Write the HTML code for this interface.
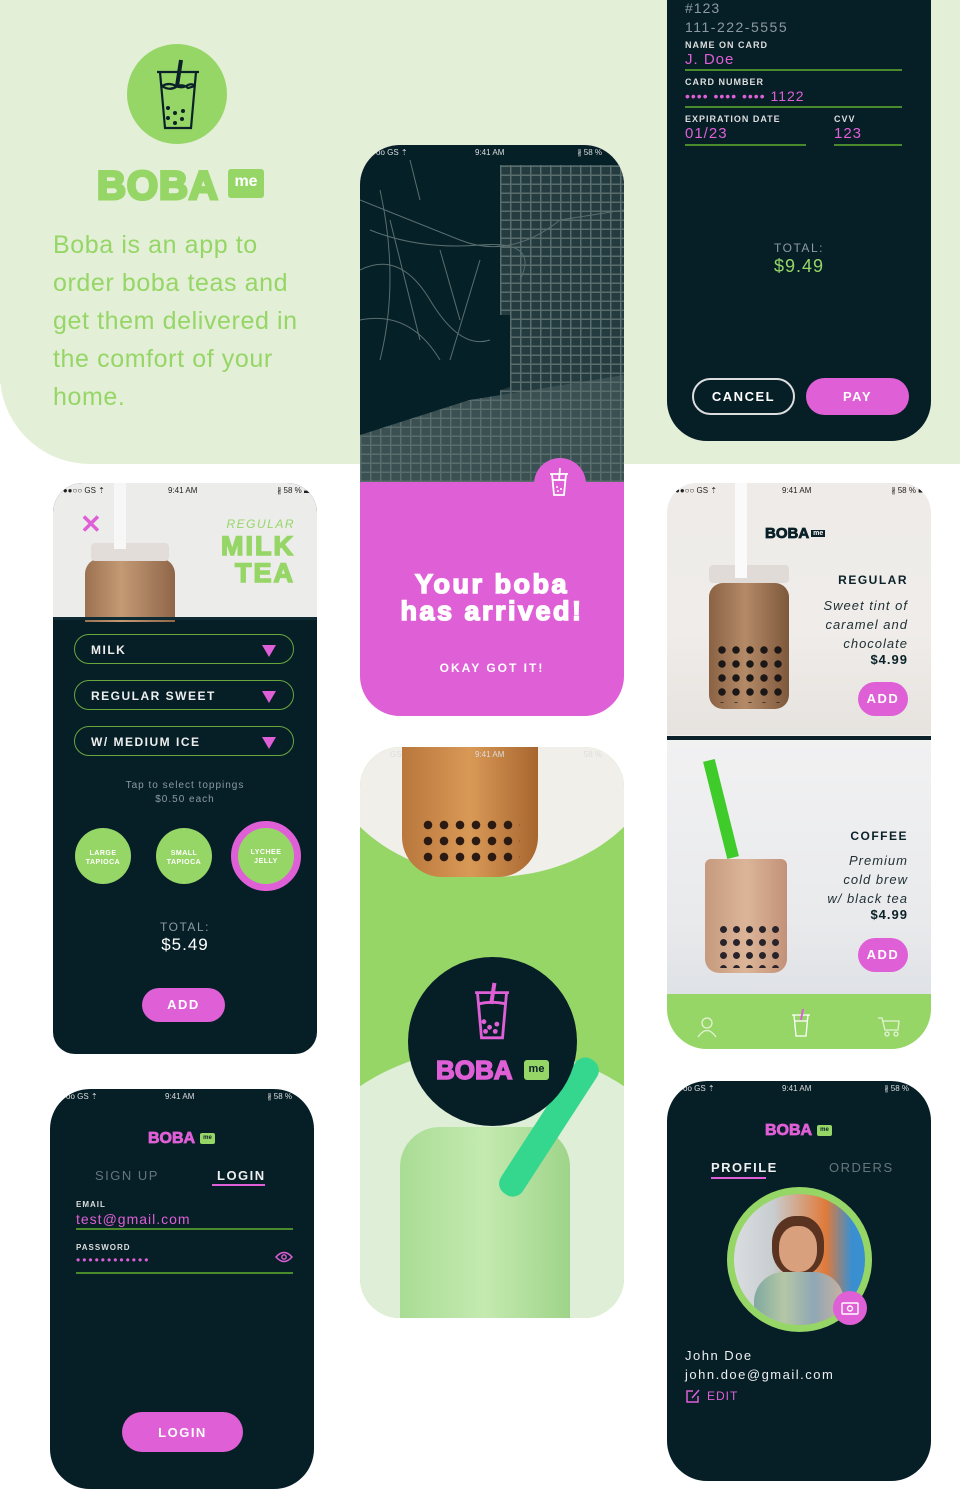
<!DOCTYPE html>
<html><head><meta charset="utf-8"><style>
*{margin:0;padding:0;box-sizing:border-box}
body{width:960px;height:1440px;position:relative;overflow:hidden;background:#fff;font-family:"Liberation Sans",sans-serif}
.a{position:absolute}
.dark{background:#061f27}
.card{position:absolute;overflow:hidden;border-radius:40px}
.sb{position:absolute;left:0;right:0;top:3px;height:12px;font-size:8px;color:#222}
.sb span{position:absolute}
.g{color:#96d667}.p{color:#df5fd6}
.lbl{font-size:9px;letter-spacing:1px;color:#ddd;font-weight:bold}
.dd{position:absolute;left:21px;width:220px;height:30px;border:1.5px solid #6aa63e;border-radius:15px;color:#eee;font-weight:bold;font-size:12px;letter-spacing:1.5px;padding:8px 0 0 16px}
.dd i{position:absolute;right:17px;top:10px;width:0;height:0;border-left:7px solid transparent;border-right:7px solid transparent;border-top:12px solid #df5fd6}
.top{position:absolute;width:56px;height:56px;border-radius:50%;background:#96d667;color:#fff;font-size:7px;font-weight:bold;text-align:center;letter-spacing:.5px;padding-top:21px;line-height:9px}
.btn{position:absolute;border-radius:20px;background:#df5fd6;color:#fff;font-weight:bold;text-align:center;letter-spacing:1.5px}
.line{position:absolute;height:1.5px;background:#4b8a2c}
.map{background-color:#062028}
.heavy{-webkit-text-stroke:1.5px currentColor}
</style></head><body>
<div class="a" style="left:0;top:0;width:960px;height:464px;background:#e3efd6"></div>
<div class="a" style="left:0;top:384px;width:90px;height:80px;background:#fff"></div>
<div class="a" style="left:0;top:300px;width:180px;height:164px;background:#e3efd6;border-bottom-left-radius:90px"></div>

<div class="a" style="left:127px;top:44px;width:100px;height:100px;border-radius:50%;background:#96d667"></div>
<svg class="a" style="left:152px;top:58px" width="52" height="76" viewBox="0 0 52 76"><g fill="none" stroke="#0b2129" stroke-width="2.2"><line x1="5" y1="14" x2="47" y2="14"/><path d="M8 14 L13 70 L39 70 L44 14"/><path d="M10 28 Q17 24 24 28 Q30 31 36 27 Q40 25 43 28"/><path d="M10 28 Q17 33 24 29 Q30 25 36 30 L43 28"/></g><line x1="29" y1="2" x2="25" y2="28" stroke="#0b2129" stroke-width="4"/><g fill="#0b2129"><circle cx="16" cy="50" r="2"/><circle cx="23" cy="55" r="2"/><circle cx="31" cy="53" r="2"/><circle cx="16" cy="60" r="2"/><circle cx="30" cy="61" r="2"/><circle cx="23" cy="65" r="2"/></g></svg>
<div class="a g" style="left:97px;top:164px;font-size:40px;font-weight:900;letter-spacing:1px;-webkit-text-stroke:3px #96d667">BOBA</div>
<div class="a" style="left:228px;top:169px;width:36px;height:29px;background:#96d667;border-radius:3px;color:#fff;font-weight:bold;font-size:16px;text-align:center;line-height:26px">me</div>
<div class="a g" style="left:53px;top:226px;font-size:25px;line-height:38px;white-space:nowrap;letter-spacing:.6px">Boba is an app to<br>order boba teas and<br>get them delivered in<br>the comfort of your<br>home.</div>

<div class="a dark" style="left:667px;top:0;width:264px;height:441px;border-radius:0 0 40px 40px"></div>
<div class="a" style="left:685px;top:0;color:#8d9aa0;font-size:14px;letter-spacing:1px">#123</div>
<div class="a" style="left:685px;top:19px;color:#8d9aa0;font-size:14px;letter-spacing:1.5px">111-222-5555</div>
<div class="a lbl" style="left:685px;top:40px">NAME ON CARD</div>
<div class="a p" style="left:685px;top:51px;font-size:15px;letter-spacing:1px">J. Doe</div>
<div class="line" style="left:685px;top:69px;width:217px"></div>
<div class="a lbl" style="left:685px;top:77px">CARD NUMBER</div>
<div class="a p" style="left:685px;top:88px;font-size:14px;letter-spacing:1px">•••• •••• •••• 1122</div>
<div class="line" style="left:685px;top:106px;width:217px"></div>
<div class="a lbl" style="left:685px;top:114px">EXPIRATION DATE</div>
<div class="a p" style="left:685px;top:125px;font-size:15px;letter-spacing:1px">01/23</div>
<div class="line" style="left:685px;top:144px;width:121px"></div>
<div class="a lbl" style="left:834px;top:114px">CVV</div>
<div class="a p" style="left:834px;top:125px;font-size:15px;letter-spacing:1px">123</div>
<div class="line" style="left:834px;top:144px;width:68px"></div>
<div class="a" style="left:667px;top:241px;width:264px;text-align:center;color:#8d9aa0;font-size:12px;letter-spacing:1.5px">TOTAL:</div>
<div class="a g" style="left:667px;top:256px;width:264px;text-align:center;font-size:18px;letter-spacing:1px">$9.49</div>
<div class="a" style="left:692px;top:378px;width:103px;height:37px;border:2px solid #ddd;border-radius:19px;color:#fff;font-weight:bold;font-size:13px;letter-spacing:1.5px;text-align:center;line-height:33px">CANCEL</div>
<div class="btn" style="left:806px;top:378px;width:103px;height:37px;font-size:13px;line-height:37px;border-radius:19px">PAY</div>

<div class="card" style="left:360px;top:145px;width:264px;height:571px;background:#df5fd6">
 <div class="a map" style="left:0;top:0;width:264px;height:337px"></div>
 <div class="a" style="left:140px;top:20px;width:124px;height:317px;background:repeating-linear-gradient(0deg,#5a6d6d 0 1.5px,transparent 1.5px 9px),repeating-linear-gradient(90deg,#5a6d6d 0 1.5px,#243c40 1.5px 10px)"></div>
 <div class="a" style="left:0;top:230px;width:264px;height:107px;background:repeating-linear-gradient(0deg,#5a6d6d 0 1.5px,transparent 1.5px 9px),repeating-linear-gradient(90deg,#5a6d6d 0 1.5px,#3a5052 1.5px 10px);clip-path:polygon(0 40%,100% 0,100% 100%,0 100%)"></div>
 <div class="a" style="left:0;top:170px;width:150px;height:120px;background:#062028;clip-path:polygon(0 0,100% 0,100% 60%,0 100%)"></div>
 <svg class="a" style="left:0;top:15px" width="264" height="220"><g fill="none" stroke="#5b6e6e" stroke-width="1"><path d="M0 40 Q50 60 100 80 T200 60 L264 50"/><path d="M10 70 Q60 90 120 85 T160 120"/><path d="M0 110 Q40 90 70 140 T130 180"/><path d="M30 60 L60 180 M80 90 L100 160 M120 100 L90 200"/><path d="M0 160 Q50 150 80 200"/><path d="M50 0 L60 40 M20 30 Q40 120 20 200"/></g></svg>
 <div class="sb" style="color:#ddd"><span style="left:16px">oo GS ⇡</span><span style="left:115px">9:41 AM</span><span style="right:22px">∦ 58 %</span></div>
 <div class="a" style="left:174px;top:313px;width:52px;height:52px;border-radius:50%;background:#df5fd6"></div>
 <svg class="a" style="left:188px;top:322px" width="22" height="30" viewBox="0 0 22 30"><g fill="none" stroke="#fff" stroke-width="1.8"><line x1="2" y1="7" x2="20" y2="7"/><path d="M4 7 L6 28 L16 28 L18 7"/><line x1="4.5" y1="13" x2="17.5" y2="13"/><line x1="12" y1="1" x2="11" y2="13"/></g><g fill="#fff"><circle cx="9" cy="20" r="1"/><circle cx="13" cy="22" r="1"/><circle cx="10" cy="24" r="1"/></g></svg>
 <div class="a heavy" style="left:0;top:426px;width:264px;text-align:center;color:#fff;font-weight:900;font-size:27px;line-height:27px;letter-spacing:2.5px">Your boba<br>has arrived!</div>
 <div class="a" style="left:0;top:516px;width:264px;text-align:center;color:#fff;font-weight:bold;font-size:12px;letter-spacing:2px">OKAY GOT IT!</div>
</div>

<div class="card dark" style="left:53px;top:483px;width:264px;height:571px;border-radius:30px 30px 22px 22px">
 <div class="a" style="left:0;top:0;width:264px;height:134px;background:#ececea"></div>
 <div class="a" style="left:32px;top:75px;width:90px;height:64px;border-radius:16px 16px 0 0;background:linear-gradient(90deg,#9b7150,#c49a75 40%,#8f6648)"></div>
 <div class="a" style="left:38px;top:60px;width:78px;height:18px;border-radius:4px;background:#e2ddd8"></div>
 <div class="a" style="left:61px;top:0;width:12px;height:66px;background:#f7f7f7"></div>
 <div class="sb"><span style="left:5px">●●●○○ GS ⇡</span><span style="left:115px">9:41 AM</span><span style="right:5px">∦ 58 % ▬</span></div>
 <div class="a p" style="left:27px;top:26px;font-size:26px;font-weight:bold">✕</div>
 <div class="a g" style="right:22px;top:34px;font-size:12px;font-style:italic;letter-spacing:1.5px">REGULAR</div>
 <div class="a g heavy" style="right:22px;top:50px;font-size:27px;font-weight:900;line-height:27px;text-align:right;letter-spacing:2px">MILK<br>TEA</div>
 <div class="a" style="left:0;top:134px;width:264px;height:3px;background:#0e2a32"></div>
 <div class="dd" style="top:151px">MILK<i></i></div>
 <div class="dd" style="top:197px">REGULAR SWEET<i></i></div>
 <div class="dd" style="top:243px">W/ MEDIUM ICE<i></i></div>
 <div class="a" style="left:0;top:296px;width:264px;text-align:center;color:#8d9aa0;font-size:10px;line-height:14px;letter-spacing:1px">Tap to select toppings<br>$0.50 each</div>
 <div class="top" style="left:22px;top:345px">LARGE<br>TAPIOCA</div>
 <div class="top" style="left:103px;top:345px">SMALL<br>TAPIOCA</div>
 <div class="top" style="left:178px;top:338px;width:70px;height:70px;border:7px solid #df5fd6;padding-top:20px">LYCHEE<br>JELLY</div>
 <div class="a" style="left:0;top:437px;width:264px;text-align:center;color:#8d9aa0;font-size:12px;letter-spacing:1.5px">TOTAL:</div>
 <div class="a" style="left:0;top:452px;width:264px;text-align:center;color:#fff;font-size:17px;letter-spacing:1px">$5.49</div>
 <div class="btn" style="left:89px;top:505px;width:83px;height:34px;line-height:34px;font-size:13px;border-radius:17px">ADD</div>
</div>

<div class="card" style="left:667px;top:483px;width:264px;height:566px;background:#f2f0ee;border-radius:30px 30px 40px 40px">
 <div class="a" style="left:0;top:0;width:264px;height:252px;background:linear-gradient(180deg,#eeebe8 0,#efece9 60%,#e6e3df 100%)"></div>
 <div class="a" style="left:42px;top:100px;width:80px;height:126px;border-radius:14px;background:linear-gradient(90deg,#8a6244,#b48a67 45%,#7e583c)"></div>
 <div class="a" style="left:42px;top:82px;width:80px;height:18px;border-radius:4px;background:#e0dbd6"></div>
 <div class="a" style="left:68px;top:0;width:12px;height:95px;background:#fafafa"></div>
 <div class="a" style="left:48px;top:160px;width:68px;height:60px;background:radial-gradient(circle,#1b1716 35%,transparent 40%) 0 0/14px 14px"></div>
 <div class="sb"><span style="left:8px">●●○○ GS ⇡</span><span style="left:115px">9:41 AM</span><span style="right:8px">∦ 58 % ■</span></div>
 <div class="a heavy" style="left:98px;top:42px;font-size:15px;font-weight:900;color:#0b2129;-webkit-text-stroke:.8px #0b2129">BOBA<span style="display:inline-block;background:#0b2129;color:#fff;font-size:7px;padding:0 2px;margin-left:2px;vertical-align:3px;-webkit-text-stroke:0">me</span></div>
 <div class="a" style="right:23px;top:90px;text-align:right;color:#0b2129;font-weight:bold;font-size:12px;letter-spacing:1.5px">REGULAR</div>
 <div class="a" style="right:23px;top:113px;text-align:right;color:#1e2e33;font-style:italic;font-size:13px;line-height:19px;letter-spacing:1px">Sweet tint of<br>caramel and<br>chocolate</div>
 <div class="a" style="right:23px;top:169px;color:#0b2129;font-weight:bold;font-size:13px;letter-spacing:1px">$4.99</div>
 <div class="btn" style="left:191px;top:199px;width:50px;height:34px;line-height:34px;font-size:13px;border-radius:17px">ADD</div>
 <div class="a" style="left:0;top:253px;width:264px;height:4px;background:#0b2129"></div>
 <div class="a" style="left:0;top:257px;width:264px;height:254px;background:linear-gradient(180deg,#f1f1f2,#e9eaec 70%,#dfe2e6)"></div>
 <div class="a" style="left:38px;top:376px;width:82px;height:114px;border-radius:6px 6px 14px 14px;background:linear-gradient(90deg,#c59a7e,#dcb598 50%,#c29278)"></div>
 <div class="a" style="left:48px;top:276px;width:12px;height:100px;background:#3fcc2a;transform:rotate(-14deg)"></div>
 <div class="a" style="left:50px;top:440px;width:66px;height:45px;background:radial-gradient(circle,#28232a 35%,transparent 40%) 0 0/13px 13px"></div>
 <div class="a" style="right:23px;top:346px;color:#0b2129;font-weight:bold;font-size:12px;letter-spacing:1.5px">COFFEE</div>
 <div class="a" style="right:23px;top:368px;text-align:right;color:#1e2e33;font-style:italic;font-size:13px;line-height:19px;letter-spacing:1px">Premium<br>cold brew<br>w/ black tea</div>
 <div class="a" style="right:23px;top:424px;color:#0b2129;font-weight:bold;font-size:13px;letter-spacing:1px">$4.99</div>
 <div class="btn" style="left:191px;top:455px;width:50px;height:34px;line-height:34px;font-size:13px;border-radius:17px">ADD</div>
 <div class="a" style="left:0;top:511px;width:264px;height:55px;background:#96d667"></div>
 <svg class="a" style="left:30px;top:533px" width="20" height="22"><g fill="none" stroke="#e4f3d6" stroke-width="1.3"><circle cx="10" cy="7" r="5"/><path d="M1 21 Q10 8 19 21"/></g></svg>
 <svg class="a" style="left:124px;top:525px" width="20" height="30"><g fill="none" stroke="#fff" stroke-width="1.3"><line x1="1" y1="7" x2="19" y2="7"/><path d="M3 7 L5 28 L15 28 L17 7"/><line x1="4" y1="13" x2="16" y2="13"/></g><line x1="12" y1="1" x2="10" y2="12" stroke="#df5fd6" stroke-width="2"/></svg>
 <svg class="a" style="left:210px;top:533px" width="24" height="22"><g fill="none" stroke="#e4f3d6" stroke-width="1.3"><path d="M1 2 L5 2 L8 14 L21 14 L22 5 L6 5"/><circle cx="10" cy="18" r="2"/><circle cx="19" cy="18" r="2"/></g></svg>
</div>

<div class="card" style="left:360px;top:747px;width:264px;height:571px;background:#96d667;border-radius:40px">
 <div class="a" style="left:-40px;top:-150px;width:344px;height:280px;border-radius:50%;background:#f1efea"></div>
 <div class="a" style="left:42px;top:0;width:136px;height:130px;background:linear-gradient(90deg,#b9773c,#d99956 50%,#a7662f);border-radius:0 0 40px 40px"></div>
 <div class="a" style="left:60px;top:70px;width:100px;height:50px;background:radial-gradient(circle,#2a1a12 35%,transparent 40%) 0 0/16px 16px"></div>
 <div class="a" style="left:-90px;top:300px;width:444px;height:400px;border-radius:50%;background:#dfeed6"></div>
 <div class="a" style="left:40px;top:380px;width:170px;height:200px;border-radius:40px 40px 0 0;background:linear-gradient(90deg,#a9dc94,#c4eab0 50%,#9ed489)"></div>
 <div class="a" style="left:176px;top:300px;width:26px;height:160px;background:#35d68e;transform:rotate(33deg);border-radius:12px"></div>
 <div class="a dark" style="left:48px;top:210px;width:169px;height:169px;border-radius:50%"></div>
 <svg class="a" style="left:111px;top:233px" width="42" height="64" viewBox="0 0 52 76"><g fill="none" stroke="#df5fd6" stroke-width="3.5"><line x1="5" y1="14" x2="47" y2="14"/><path d="M8 14 L13 70 L39 70 L44 14"/><path d="M10 28 Q25 24 43 28"/></g><line x1="29" y1="2" x2="25" y2="28" stroke="#df5fd6" stroke-width="5"/><g fill="#df5fd6"><circle cx="16" cy="50" r="3"/><circle cx="23" cy="57" r="3"/><circle cx="32" cy="53" r="3"/><circle cx="18" cy="62" r="3"/><circle cx="30" cy="62" r="3"/></g></svg>
 <div class="a p" style="left:76px;top:308px;font-size:26px;font-weight:900;-webkit-text-stroke:1.5px #df5fd6">BOBA</div>
 <div class="a" style="left:164px;top:313px;width:25px;height:20px;border-radius:3px;background:#96d667;color:#0b2129;font-size:11px;font-weight:bold;text-align:center;line-height:19px">me</div>
 <div class="sb" style="color:#ddd"><span style="left:30px">GS</span><span style="left:115px">9:41 AM</span><span style="right:22px">58 %</span></div>
</div>

<div class="card dark" style="left:50px;top:1089px;width:264px;height:400px">
 <div class="sb" style="color:#ddd"><span style="left:16px">oo GS ⇡</span><span style="left:115px">9:41 AM</span><span style="right:22px">∦ 58 %</span></div>
 <div class="a p" style="left:98px;top:41px;font-size:16px;font-weight:900;-webkit-text-stroke:.8px #df5fd6">BOBA</div>
 <div class="a" style="left:150px;top:44px;width:15px;height:11px;border-radius:2px;background:#96d667;color:#0b2129;font-size:6px;font-weight:bold;text-align:center;line-height:11px">me</div>
 <div class="a" style="left:45px;top:79px;color:#66757a;font-size:13px;letter-spacing:1.5px">SIGN UP</div>
 <div class="a" style="left:167px;top:79px;color:#eee;font-size:13px;font-weight:bold;letter-spacing:1.5px">LOGIN</div>
 <div class="a" style="left:162px;top:95px;width:53px;height:2px;background:#df5fd6"></div>
 <div class="a lbl" style="left:26px;top:111px;font-size:8px">EMAIL</div>
 <div class="a p" style="left:26px;top:122px;font-size:14px;letter-spacing:1px">test@gmail.com</div>
 <div class="line" style="left:26px;top:139px;width:217px"></div>
 <div class="a lbl" style="left:26px;top:154px;font-size:8px">PASSWORD</div>
 <div class="a p" style="left:26px;top:164px;font-size:12px;letter-spacing:2px">••••••••••••</div>
 <svg class="a" style="left:225px;top:162px" width="18" height="12"><g fill="none" stroke="#df5fd6" stroke-width="1.4"><path d="M1 6 Q9 -3 17 6 Q9 15 1 6Z"/><circle cx="9" cy="6" r="2.2"/></g></svg>
 <div class="line" style="left:26px;top:183px;width:217px"></div>
 <div class="btn" style="left:72px;top:323px;width:121px;height:40px;line-height:42px;font-size:13px">LOGIN</div>
</div>

<div class="card dark" style="left:667px;top:1081px;width:264px;height:400px">
 <div class="sb" style="color:#ddd"><span style="left:16px">oo GS ⇡</span><span style="left:115px">9:41 AM</span><span style="right:22px">∦ 58 %</span></div>
 <div class="a p" style="left:98px;top:41px;font-size:16px;font-weight:900;-webkit-text-stroke:.8px #df5fd6">BOBA</div>
 <div class="a" style="left:150px;top:44px;width:15px;height:11px;border-radius:2px;background:#96d667;color:#0b2129;font-size:6px;font-weight:bold;text-align:center;line-height:11px">me</div>
 <div class="a" style="left:44px;top:79px;color:#eee;font-size:13px;font-weight:bold;letter-spacing:1.5px">PROFILE</div>
 <div class="a" style="left:44px;top:96px;width:55px;height:2px;background:#df5fd6"></div>
 <div class="a" style="left:162px;top:79px;color:#66757a;font-size:13px;letter-spacing:1.5px">ORDERS</div>
 <div class="a" style="left:60px;top:106px;width:145px;height:145px;border-radius:50%;background:#96d667"></div>
 <div class="a" style="left:67px;top:113px;width:131px;height:131px;border-radius:50%;overflow:hidden;background:linear-gradient(90deg,#d9dde0 0,#c8cdd0 30%,#e07a3a 70%,#3a8fd0 90%)">
  <div class="a" style="left:38px;top:22px;width:52px;height:60px;border-radius:45%;background:#5a3420"></div>
  <div class="a" style="left:45px;top:32px;width:38px;height:46px;border-radius:45%;background:#d9a07e"></div>
  <div class="a" style="left:20px;top:78px;width:90px;height:60px;border-radius:30px 30px 0 0;background:linear-gradient(90deg,#7fa9a0,#b5c7a5,#8fa7b5,#c9b2a0)"></div>
 </div>
 <div class="a" style="left:166px;top:210px;width:34px;height:34px;border-radius:50%;background:#df5fd6"></div>
 <svg class="a" style="left:174px;top:219px" width="18" height="15"><g fill="none" stroke="#fff" stroke-width="1.4"><rect x="1" y="3" width="16" height="11" rx="1"/><circle cx="9" cy="8.5" r="2.5"/></g></svg>
 <div class="a" style="left:18px;top:265px;color:#eee;font-size:13px;letter-spacing:1.5px;line-height:19px">John Doe<br>john.doe@gmail.com</div>
 <svg class="a" style="left:18px;top:307px" width="16" height="16"><g fill="none" stroke="#df5fd6" stroke-width="1.5"><path d="M8 3 H2 V14 H13 V8"/><path d="M7 10 L14 2"/></g></svg>
 <div class="a p" style="left:40px;top:308px;font-size:12px;letter-spacing:1px">EDIT</div>
</div>
</body></html>
